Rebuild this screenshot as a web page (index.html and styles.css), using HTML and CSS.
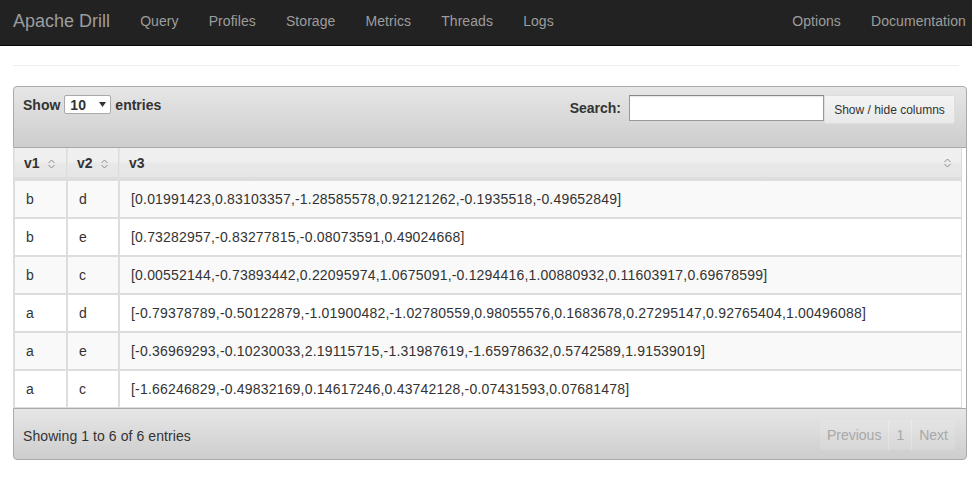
FILE: index.html
```html
<!DOCTYPE html>
<html>
<head>
<meta charset="utf-8">
<link rel="stylesheet" href="styles.css">
</head>
<body>
<nav class="navbar">
  <a class="brand">Apache Drill</a>
  <ul class="nav">
    <li>Query</li><li>Profiles</li><li>Storage</li><li>Metrics</li><li>Threads</li><li>Logs</li>
  </ul>
  <ul class="nav nav-right">
    <li>Options</li><li>Documentation</li>
  </ul>
</nav>
<div class="container">
  <hr class="rule">
  <div class="dt-wrapper">
    <div class="toolbar top">
      <label class="length">Show
        <span class="select">10<svg width="7" height="5" viewBox="0 0 7 5"><path d="M0 0h7L3.5 5z" fill="#333"/></svg></span>
        entries</label>
      <div class="right-tools">
        <label class="search">Search: <span class="input"></span></label>
        <span class="colvis">Show / hide columns</span>
      </div>
    </div>
    <div class="scroll">
      <table class="grid">
        <thead>
          <tr>
            <th class="c1">v1 <svg class="sort" width="7" height="10" viewBox="0 0 7 10"><path d="M0.5 4L3.5 1L6.5 4M0.5 6L3.5 9L6.5 6" fill="none" stroke="#8a8a8a" stroke-width="1"/></svg></th>
            <th class="c2">v2 <svg class="sort" width="7" height="10" viewBox="0 0 7 10"><path d="M0.5 4L3.5 1L6.5 4M0.5 6L3.5 9L6.5 6" fill="none" stroke="#8a8a8a" stroke-width="1"/></svg></th>
            <th class="c3"><span>v3</span><svg class="sort" width="7" height="10" viewBox="0 0 7 10"><path d="M0.5 4L3.5 1L6.5 4M0.5 6L3.5 9L6.5 6" fill="none" stroke="#8a8a8a" stroke-width="1"/></svg></th>
          </tr>
        </thead>
        <tbody>
          <tr><td>b</td><td>d</td><td>[0.01991423,0.83103357,-1.28585578,0.92121262,-0.1935518,-0.49652849]</td></tr>
          <tr><td>b</td><td>e</td><td>[0.73282957,-0.83277815,-0.08073591,0.49024668]</td></tr>
          <tr><td>b</td><td>c</td><td>[0.00552144,-0.73893442,0.22095974,1.0675091,-0.1294416,1.00880932,0.11603917,0.69678599]</td></tr>
          <tr><td>a</td><td>d</td><td>[-0.79378789,-0.50122879,-1.01900482,-1.02780559,0.98055576,0.1683678,0.27295147,0.92765404,1.00496088]</td></tr>
          <tr><td>a</td><td>e</td><td>[-0.36969293,-0.10230033,2.19115715,-1.31987619,-1.65978632,0.5742589,1.91539019]</td></tr>
          <tr><td>a</td><td>c</td><td>[-1.66246829,-0.49832169,0.14617246,0.43742128,-0.07431593,0.07681478]</td></tr>
        </tbody>
      </table>
    </div>
    <div class="toolbar bottom">
      <div class="info">Showing 1 to 6 of 6 entries</div>
      <div class="paging">
        <span class="pbtn">Previous</span><span class="pbtn">1</span><span class="pbtn">Next</span>
      </div>
    </div>
  </div>
</div>
</body>
</html>
```
FILE: styles.css
```css
* { box-sizing: border-box; }
body {
  margin: 0;
  font-family: "Liberation Sans", Arial, sans-serif;
  font-size: 14px;
  color: #333;
  background: #fff;
}
.navbar {
  display: flex;
  align-items: center;
  height: 46px;
  padding-bottom: 3px;
  background: #222;
  border-bottom: 1px solid #080808;
}
.brand {
  font-size: 18px;
  color: #9d9d9d;
  padding-left: 13px;
  padding-right: 15px;
}
.nav {
  display: flex;
  list-style: none;
  margin: 0;
  padding: 0;
}
.nav li {
  color: #9d9d9d;
  padding: 0 15.1px;
  line-height: 20px;
  letter-spacing: 0.05px;
}
.nav-right {
  margin-left: auto;
  margin-right: -9px;
}
.container {
  padding: 0 0 0 13px;
}
.rule {
  margin: 19px 0 20px 0;
  width: 946px;
  border: 0;
  border-top: 1px solid #eee;
}
.dt-wrapper {
  width: 954px;
}
.toolbar {
  background: linear-gradient(to bottom, #e6e6e6 0%, #cdcdcd 100%);
  border: 1px solid #aaa;
}
.toolbar.top {
  height: 62px;
  border-radius: 4px 4px 0 0;
  display: flex;
  justify-content: space-between;
  align-items: flex-start;
  padding: 8px 11px 0 9px;
}
.length {
  font-weight: bold;
  display: flex;
  align-items: center;
  gap: 4px;
  height: 19px;
}
.select {
  display: inline-flex;
  align-items: center;
  justify-content: space-between;
  width: 47px;
  height: 19px;
  background: #fff;
  border: 1px solid #a9a9a9;
  border-radius: 2px;
  padding: 0 4px 0 5px;
  font-weight: bold;
  font-size: 14px;
}
.right-tools {
  display: flex;
  align-items: flex-start;
}
.search {
  font-weight: bold;
  display: flex;
  align-items: center;
  gap: 8px;
  height: 26px;
}
.input {
  display: inline-block;
  width: 195px;
  height: 26px;
  background: #fff;
  border: 1px solid #999;
  border-top-color: #888;
  box-shadow: inset 0 1px 1px rgba(0,0,0,0.1);
}
.colvis {
  display: inline-flex;
  align-items: center;
  justify-content: center;
  width: 131px;
  height: 29px;
  font-size: 12px;
  color: #333;
  background: linear-gradient(to bottom, #f4f4f4, #e9e9e9);
  border: 1px solid #ddd;
  border-radius: 2px;
}
.scroll {
  border-left: 1px solid #ddd;
  border-right: 1px solid #aaa;
  padding-right: 4px;
  background: #fff;
}
.grid {
  width: 100%;
  border-collapse: separate;
  border-spacing: 0;
}
.grid th {
  text-align: left;
  font-weight: bold;
  height: 32px;
  padding: 0 9px;
  background: linear-gradient(to bottom, #f0f0f0 0%, #efefef 45%, #e8e8e8 55%, #e6e6e6 100%);
  border-right: 1px solid #ddd;
  border-left: 1px solid #e4e4e4;
  border-bottom: 3px solid #ddd;
  white-space: nowrap;
}
.grid th .sort { margin-left: 5px; vertical-align: -1px; }
.grid th.c1 { width: 53px; }
.grid th.c2 { width: 52px; }
.grid th.c3 .sort { float: right; margin-top: 3px; margin-right: 1px; }
.grid td {
  padding: 9px 11px;
  line-height: 18px;
  border: 1px solid #ddd;
  white-space: nowrap;
  letter-spacing: 0.19px;
}
.grid tbody tr:nth-child(odd) td { background: #f9f9f9; }
.grid tbody tr:nth-child(even) td { background: #fff; }
.toolbar.bottom {
  height: 52px;
  border-radius: 0 0 4px 4px;
  display: flex;
  justify-content: space-between;
  align-items: center;
  padding: 0 11px 0 9px;
}
.info { padding-top: 3px; letter-spacing: 0.08px; }
.paging {
  display: flex;
  height: 30px;
  margin-top: 2px;
}
.pbtn {
  display: inline-flex;
  align-items: center;
  padding: 0 7px;
  color: #a8a8a8;
  background: rgba(255,255,255,0.12);
  border-left: 1px solid rgba(255,255,255,0.25);
}
.pbtn:first-child { border-left: 0; border-radius: 2px 0 0 2px; }
.pbtn:last-child { border-radius: 0 2px 2px 0; }
```
